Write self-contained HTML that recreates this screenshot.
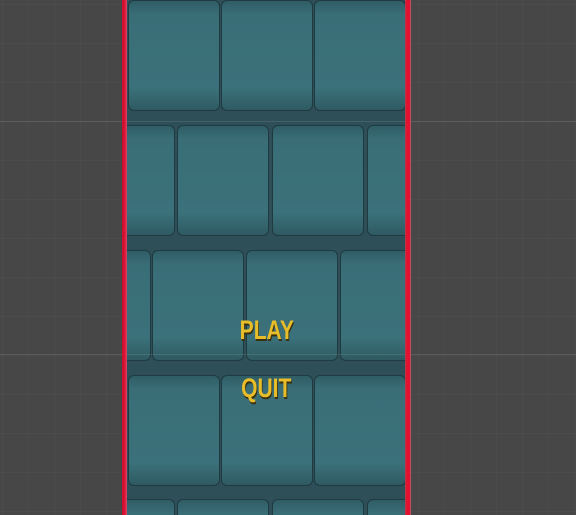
<!DOCTYPE html><html><head><style>
html,body{margin:0;padding:0;overflow:hidden;width:576px;height:515px}
body{position:relative;background:#474747;
background-image:linear-gradient(rgba(255,255,255,0.025) 1px,transparent 1px),linear-gradient(90deg,rgba(255,255,255,0.025) 1px,transparent 1px);
background-size:26px 39px;background-position:2px 4px;font-family:"Liberation Sans",sans-serif}
.hl{position:absolute;left:0;width:576px;height:1px;background:rgba(255,255,255,0.1)}
#panel{position:absolute;left:127px;top:0;width:279px;height:515px;background:#2e4f57;overflow:hidden}
.t{position:absolute;width:92px;height:111px;border:1px solid #1f3a40;border-radius:6px;box-sizing:border-box;
background:linear-gradient(#2f5d66 0px,#3a6e77 14px,#3b717a 80%,#2f5a62 100%)}
.rl{position:absolute;top:0;height:515px;background:#e0102f}
.txt{position:absolute;left:127px;width:279px;text-align:center;color:#e7bd2a;font-weight:bold;font-size:27px;
text-shadow:1px 2px 0 #3a3010}
.txt span{display:inline-block;transform:scaleX(0.78)}
</style></head><body>
<div id="panel">
<div class="t" style="left:1px;top:0"></div>
<div class="t" style="left:94px;top:0"></div>
<div class="t" style="left:187px;top:0"></div>
<div class="t" style="left:-44px;top:125px"></div>
<div class="t" style="left:50px;top:125px"></div>
<div class="t" style="left:145px;top:125px"></div>
<div class="t" style="left:240px;top:125px"></div>
<div class="t" style="left:-68px;top:250px"></div>
<div class="t" style="left:25px;top:250px"></div>
<div class="t" style="left:119px;top:250px"></div>
<div class="t" style="left:213px;top:250px"></div>
<div class="t" style="left:1px;top:375px"></div>
<div class="t" style="left:94px;top:375px"></div>
<div class="t" style="left:187px;top:375px"></div>
<div class="t" style="left:-44px;top:499px"></div>
<div class="t" style="left:50px;top:499px"></div>
<div class="t" style="left:145px;top:499px"></div>
<div class="t" style="left:240px;top:499px"></div>
</div>
<div class="hl" style="top:121px"></div>
<div class="hl" style="top:354px"></div>
<div class="rl" style="left:122px;width:5px;background:linear-gradient(90deg,#c0102a,#e3123a 60%,#d0506a)"></div>
<div class="rl" style="left:405px;width:6px;background:linear-gradient(90deg,#b04050,#e3102f 30%,#e3102f 80%,#a08088)"></div>
<div class="txt" style="top:315px"><span>PLAY</span></div>
<div class="txt" style="top:373px"><span>QUIT</span></div>
</body></html>
